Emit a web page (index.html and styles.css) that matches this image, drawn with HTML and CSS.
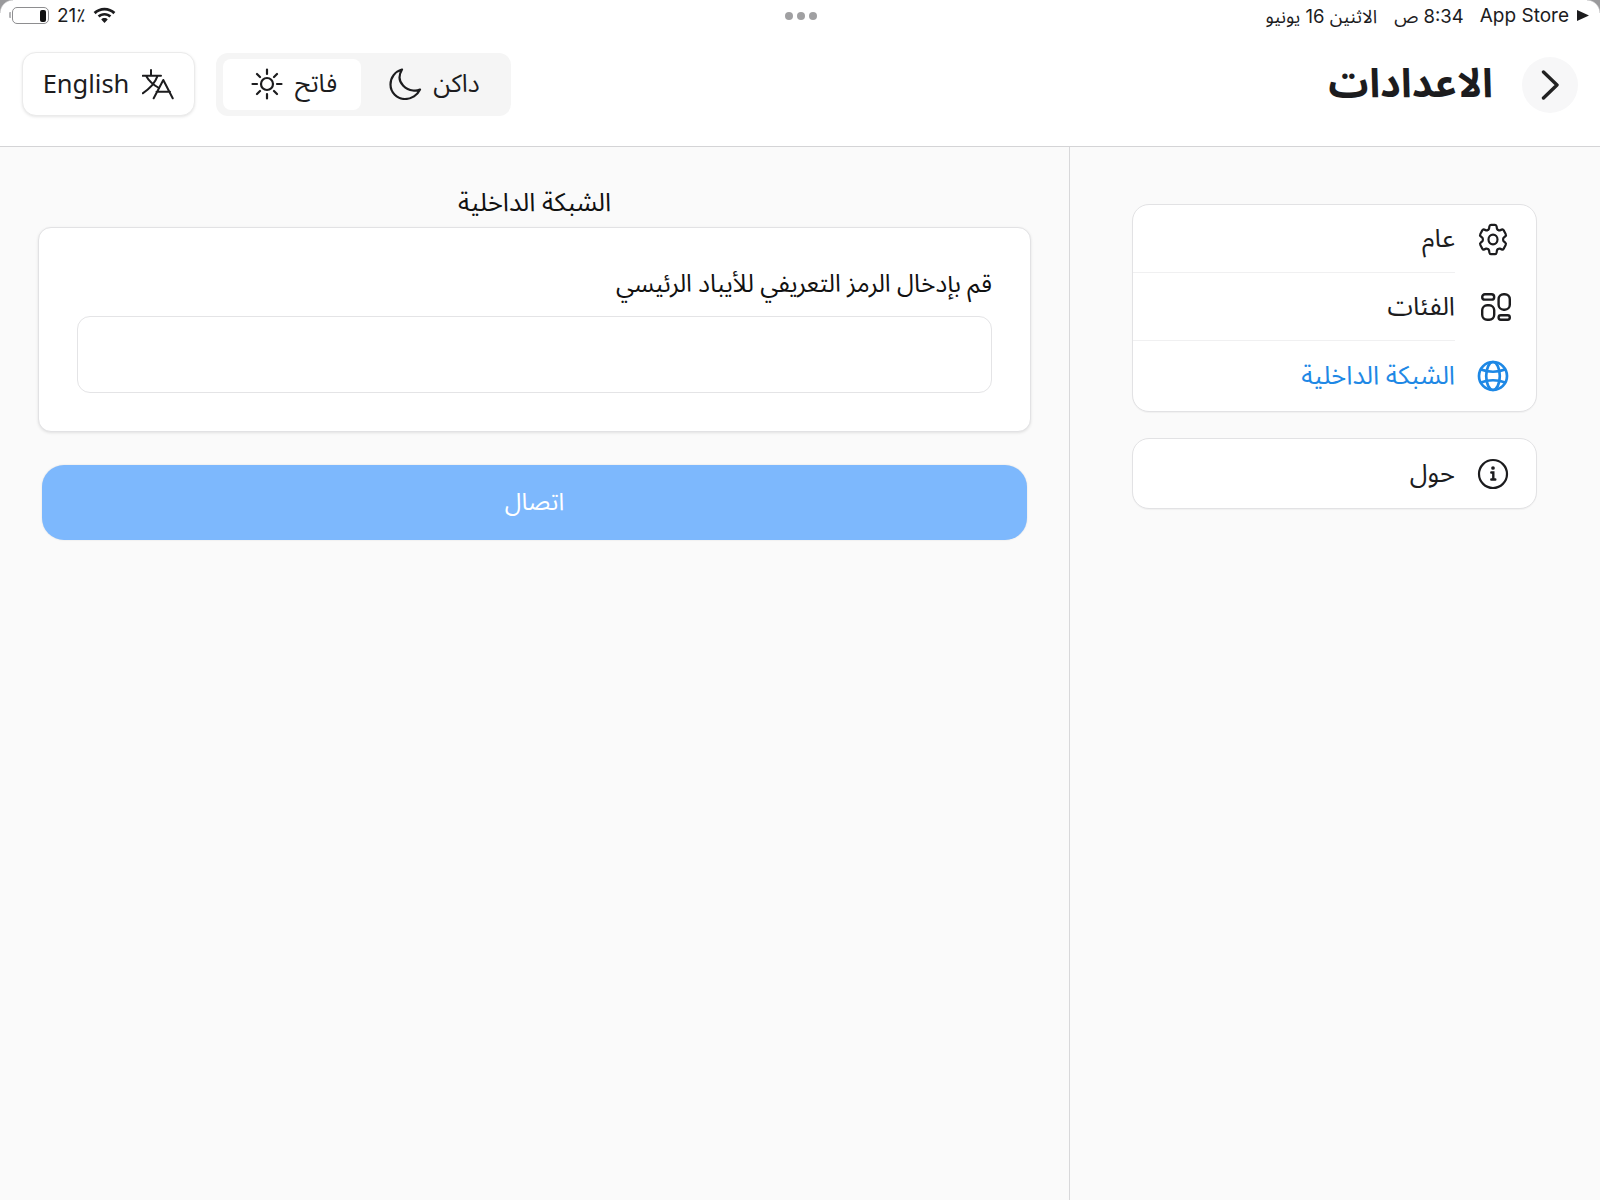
FILE: index.html
```html
<!DOCTYPE html>
<html lang="ar" dir="rtl">
<head>
<meta charset="utf-8">
<title>الاعدادات</title>
<link rel="stylesheet" href="styles.css">
</head>
<body>
<div class="app">
  <header class="top">
    <div class="status">
      <div class="status-side">
        <svg class="tri" width="12" height="11" viewBox="0 0 11 10"><polygon points="0,0 11,5 0,10"/></svg>
        <span class="store" dir="ltr">App Store</span>
        <span class="clock">8:34 ص</span>
        <span class="date">الاثنين 16 يونيو</span>
      </div>
      <div class="dots"><i></i><i></i><i></i></div>
      <div class="status-side status-left">
        <svg class="wifi" width="23" height="17" viewBox="1 2 22 16"><path d="M12 2.500C8 2.500 4.400 4 1.600 6.700L3.500 8.700C5.700 6.500 8.700 5.200 12 5.200s6.300 1.300 8.500 3.500L22.400 6.700C19.600 4 16 2.500 12 2.500z"/><path d="M12 7.500c-2.500 0-4.800 1-6.500 2.600l1.800 1.900C8.500 10.800 10.100 10.100 12 10.100s3.500.7 4.700 1.900l1.800-1.900C16.800 8.500 14.500 7.500 12 7.500z"/><path d="M12 12.500c-1.200 0-2.300.5-3.100 1.300L12 17.200l3.100-3.400c-.8-.8-1.900-1.300-3.100-1.300z"/></svg>
        <span class="pct">21٪</span>
        <span class="battery"><b></b></span>
      </div>
    </div>
    <div class="bar">
      <div class="title-group">
        <button class="back" aria-label="رجوع">
          <svg width="30" height="30" viewBox="0 0 30 30" fill="none" stroke="#222" stroke-width="3.400" stroke-linecap="round" stroke-linejoin="round"><path d="M8.500 2 22 15 8.500 28"/></svg>
        </button>
        <h1>الاعدادات</h1>
      </div>
      <div class="controls">
        <div class="segment">
          <div class="seg-item">
            <span>داكن</span>
            <svg width="33" height="32" viewBox="0 0 33 32" fill="none" stroke="#1c1c1e" stroke-width="2.200" stroke-linejoin="round" stroke-linecap="round"><path d="M13 1.500C6 3.500 1.500 9.500 1.500 16.500 1.500 24.500 8 31 16 31c6.500 0 12.500-4 15-9.500-2 1-4.500 1.500-7 1C16 21.500 10.500 15 10.500 9.500c0-3 1-5.500 2.500-8z"/></svg>
          </div>
          <div class="seg-item active">
            <span>فاتح</span>
            <svg width="32" height="32" viewBox="0 0 32 32" fill="none" stroke="#1c1c1e" stroke-width="2.200" stroke-linecap="round"><circle cx="16" cy="16" r="6"/><path d="M16 1.500v4.500M16 26v4.500M1.500 16H6M26 16h4.500M6 6l3 3M23 23l3 3M6 26l3-3M23 9l3-3"/></svg>
          </div>
        </div>
        <button class="lang">
          <svg width="32" height="31" viewBox="0 0 32 31" fill="none" stroke="#1c1c1e" stroke-width="2" stroke-linecap="round" stroke-linejoin="round"><path d="M.7 6.700H19M9 1v5.700M15.700 6.700Q12 17 .7 24.300M4 6.700Q8 14 17 19"/><path d="M11.700 29.300 21.300 11l9.400 18.300M14.500 22.700H28"/></svg>
          <span class="lang-name" dir="ltr">English</span>
        </button>
      </div>
    </div>
  </header>
  <div class="content">
    <aside class="side">
      <nav class="card menu">
        <div class="row">
          <span class="ico"><svg width="36" height="39" viewBox="0 0 24 24" preserveAspectRatio="none" fill="none" stroke="#1c1c1e" stroke-width="1.450" stroke-linecap="round" stroke-linejoin="round"><path d="M9.594 3.940c.09-.542.56-.94 1.110-.94h2.593c.55 0 1.020.398 1.110.94l.213 1.281c.063.374.313.686.645.870.074.040.147.083.22.127.325.196.72.257 1.075.124l1.217-.456a1.125 1.125 0 0 1 1.370.49l1.296 2.247a1.125 1.125 0 0 1-.26 1.431l-1.003.827c-.293.241-.438.613-.43.992a7.723 7.723 0 0 1 0 .255c-.008.378.137.75.43.991l1.004.827c.424.35.534.955.26 1.430l-1.298 2.247a1.125 1.125 0 0 1-1.369.491l-1.217-.456c-.355-.133-.75-.072-1.076.124a6.470 6.470 0 0 1-.22.128c-.331.183-.581.495-.644.869l-.213 1.281c-.09.543-.56.94-1.110.94h-2.594c-.55 0-1.019-.398-1.110-.94l-.213-1.281c-.062-.374-.312-.686-.644-.87a6.520 6.520 0 0 1-.22-.127c-.325-.196-.72-.257-1.076-.124l-1.217.456a1.125 1.125 0 0 1-1.369-.49l-1.297-2.247a1.125 1.125 0 0 1 .26-1.431l1.004-.827c.292-.24.437-.613.43-.991a6.932 6.932 0 0 1 0-.255c.007-.38-.138-.751-.43-.992l-1.004-.827a1.125 1.125 0 0 1-.26-1.430l1.297-2.247a1.125 1.125 0 0 1 1.370-.491l1.216.456c.356.133.751.072 1.076-.124.072-.044.146-.086.22-.128.332-.183.582-.495.644-.869l.214-1.280Z"/><path d="M15 12a3 3 0 1 1-6 0 3 3 0 0 1 6 0Z"/></svg></span>
          <span class="label">عام</span>
        </div>
        <div class="row">
          <span class="ico ico-cat"><svg width="30" height="28" viewBox="0 0 30 28" fill="none" stroke="#1c1c1e" stroke-width="2.400"><rect x="1.200" y="1.200" width="12" height="5.400" rx="2.700"/><rect x="1.200" y="12.300" width="12" height="14.500" rx="5"/><rect x="17.600" y="1.200" width="11.200" height="15.500" rx="5"/><rect x="17.600" y="22.300" width="11.200" height="4.500" rx="2.200"/></svg></span>
          <span class="label">الفئات</span>
        </div>
        <div class="row current">
          <span class="ico"><svg width="32" height="32" viewBox="0 0 32 32" fill="none" stroke="#1e88e5" stroke-width="2.700"><circle cx="16" cy="16" r="14"/><ellipse cx="16" cy="16" rx="6.800" ry="14"/><path d="M4 9.500c7 3 17 3 24 0M4 22.500c7-3 17-3 24 0"/></svg></span>
          <span class="label">الشبكة الداخلية</span>
        </div>
      </nav>
      <nav class="card menu">
        <div class="row">
          <span class="ico"><svg width="32" height="32" viewBox="0 0 32 32" fill="none" stroke="#1c1c1e" stroke-width="2.200" stroke-linecap="round"><circle cx="16" cy="16" r="14"/><path d="M14.300 14.500h2V21.500M14.300 21.500h4" stroke-width="2.400"/><circle cx="16" cy="10" r=".9" stroke-width="1.900"/></svg></span>
          <span class="label">حول</span>
        </div>
      </nav>
    </aside>
    <main class="main">
      <h2>الشبكة الداخلية</h2>
      <section class="card panel">
        <label class="field-label" for="id">قم بإدخال الرمز التعريفي للأيباد الرئيسي</label>
        <input id="id" class="field" type="text">
      </section>
      <button class="connect">اتصال</button>
    </main>
  </div>
</div>
</body>
</html>
```

FILE: styles.css
```css
* { box-sizing: border-box; }
html, body { margin: 0; height: 100%; }
body {
  font-family: "Noto Sans Arabic", "Noto Sans", "Inter", "DejaVu Sans", sans-serif;
  color: #1c1c1e;
  background: #fafafa;
}
button, input { font: inherit; color: inherit; }
.app { position: relative; height: 1200px; display: flex; flex-direction: column; overflow: hidden; }
.app::before, .app::after {
  content: ""; position: absolute; top: 0; width: 13px; height: 13px;
}
.app::before { left: 0; background: radial-gradient(circle at 100% 100%, transparent 12px, #9a9a9c 13.500px); }
.app::after { right: 0; background: radial-gradient(circle at 0 100%, transparent 12px, #9a9a9c 13.500px); }

.top { background: #fff; height: 147px; border-bottom: 1px solid #d4d4d6; flex: none; }
.status {
  height: 31px;
  display: grid;
  grid-template-columns: 1fr auto 1fr;
  align-items: center;
  padding: 0 11px 0 12px;
  font-size: 19px;
  line-height: 22px;
  font-family: "Inter", "Noto Sans Arabic", sans-serif;
}
.status-side { display: flex; align-items: center; height: 22px; }
.status-left { justify-content: flex-end; gap: 8px; }
.tri { fill: #1c1c1e; flex: none; }
.store { margin-right: 8px; }
.clock { margin-right: 16px; font-size: 18.500px; }
.date { margin-right: 17px; font-size: 18.500px; }
.dots { display: flex; gap: 4px; }
.dots i { width: 8px; height: 8px; border-radius: 50%; background: #a0a0a2; }
.wifi { fill: #1c1c1e; }
.pct { direction: ltr; }
.battery {
  position: relative;
  width: 37px; height: 17px; border: 1.500px solid #8e8e90; border-radius: 5px;
  display: flex; justify-content: flex-start; padding: 1.500px 2px;
}
.battery::after {
  content: ""; position: absolute; left: -4.500px; top: 4px; width: 2px; height: 6px;
  background: #b5b5b7; border-radius: 1px 0 0 1px;
}
.battery b { width: 6px; background: #111; border-radius: 2px; }

.bar { height: 106px; display: flex; justify-content: space-between; align-items: center; padding: 0 22px 0 22px; }
.title-group { display: flex; align-items: center; gap: 29px; margin-top: 1px; }
.back {
  width: 56px; height: 56px; border-radius: 50%; border: 0; background: #f7f7f8;
  display: flex; align-items: center; justify-content: center; padding: 0;
}
h1 { margin: 0; font-size: 40px; font-weight: 700; }
.controls { display: flex; align-items: center; gap: 21px; }
.segment { width: 295px; height: 63px; background: #f5f5f5; border-radius: 12px; padding: 6px 7px; display: flex; }
.seg-item { flex: 1; display: flex; align-items: center; justify-content: center; gap: 11px; font-size: 25px; border-radius: 8px; padding-left: 4px; }
.seg-item.active { background: #fff; flex: none; width: 138px; gap: 12px; }
.lang {
  width: 173px; height: 64px; background: #fff; border: 1px solid #ebebeb; border-radius: 14px;
  box-shadow: 0 1px 3px rgba(0,0,0,.1);
  display: flex; align-items: center; justify-content: center; gap: 13px; font-size: 25.500px; padding: 0;
  font-family: "Noto Sans", sans-serif;
}
.lang-name { margin-bottom: 2px; }

.content { flex: 1; display: flex; }
.side { width: 531px; border-left: 1px solid #d8d8da; flex: none; padding: 57px 63px 0 62px; display: flex; flex-direction: column; gap: 26px; }
.card { background: #fff; border: 1px solid #e2e2e4; }
.menu { border-radius: 17px; box-shadow: 0 1px 1px rgba(0,0,0,.04); }
.row { display: flex; align-items: stretch; height: 68px; }
.row:last-child { height: 70px; }
.row:only-child { height: 69px; }
.ico { width: 81px; flex: none; display: flex; align-items: center; justify-content: center; padding-right: 5px; }
.ico-cat { padding-right: 0; }
.label { flex: 1; display: flex; align-items: center; font-size: 25.800px; border-bottom: 1px solid #f0f0f1; }
.row:last-child .label { border-bottom: 0; }
.current { color: #1e88e5; }

.main { flex: 1; padding: 37px 38px 0 38px; display: flex; flex-direction: column; align-items: center; }
h2 { margin: 0 0 5px; font-size: 25.700px; font-weight: 400; height: 38px; line-height: 38px; color: #111; }
.panel { width: 100%; height: 205px; border-radius: 13px; padding: 34px 38px; box-shadow: 0 1px 3px rgba(0,0,0,.1); }
.field-label { display: block; font-size: 24.500px; height: 54px; line-height: 44px; color: #111; }
.field { display: block; width: 100%; height: 77px; border: 1px solid #e4e4e6; border-radius: 13px; background: #fff; outline: 0; }
.connect {
  width: 985px; height: 75px; margin-top: 33px; border: 0; border-radius: 22px;
  background: #7db8fd; color: #fff; font-size: 24px; box-shadow: 0 0 2px rgba(0,0,0,.12);
}
```
